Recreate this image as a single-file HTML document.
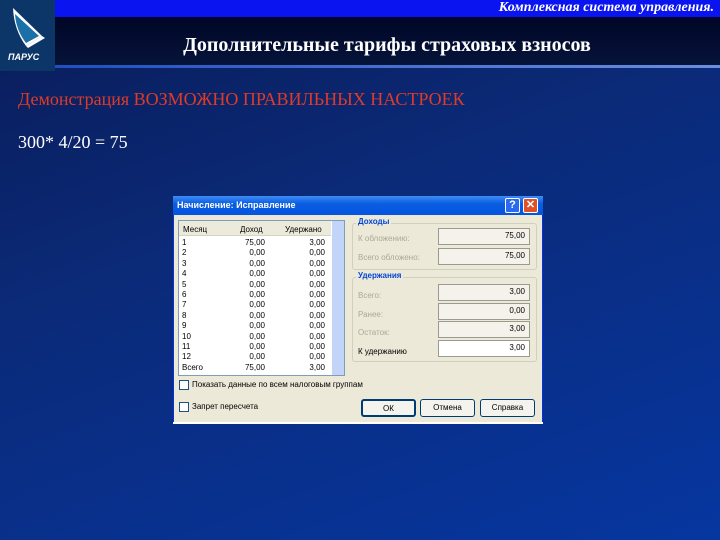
<!DOCTYPE html>
<html><head><meta charset="utf-8"><style>
*{margin:0;padding:0;box-sizing:border-box}
body{width:720px;height:540px;overflow:hidden;position:relative;font-family:"Liberation Serif","DejaVu Serif",serif;
background:linear-gradient(160deg,#0a1c58 0%,#0b2a78 40%,#0636a0 100%);}
.abs{position:absolute}
.d{font-family:"Liberation Sans","DejaVu Sans",sans-serif;font-size:8px;color:#000;position:absolute;white-space:nowrap}
.f{position:absolute;left:438px;width:92px;height:17px;background:#f4f2ea;border:1px solid #9a9a90;font-family:"Liberation Sans",sans-serif;font-size:8px;text-align:right;padding:2px 4px 0 0}
.g{color:#aca899}
.btn{position:absolute;top:399px;width:55px;height:18px;background:#f4f3ee;border:1px solid #003c74;border-radius:3px;font-family:"Liberation Sans",sans-serif;font-size:8px;text-align:center;line-height:16px}
</style></head><body>
<div class="abs" style="left:55px;top:0;width:665px;height:17px;background:#0a14f0"></div>
<div class="abs" style="left:55px;top:17px;width:665px;height:49px;background:linear-gradient(180deg,#000626,#06143a)"></div>
<div class="abs" style="left:55px;top:65px;width:665px;height:3px;background:linear-gradient(90deg,#2050c0,#6a8ee0)"></div>
<div class="abs" style="left:0;top:0;width:55px;height:71px;background:#0d3668"></div>
<svg class="abs" style="left:0;top:0" width="55" height="71">
<path d="M13 8 L42 36 L26 46 Q14 30 13 8Z" fill="#fff"/>
<path d="M15 14 L39 36 L26 43 Q16 30 15 14Z" fill="#1c70a8"/>
<path d="M42 36 L45 38 L28 48 L26 46Z" fill="#fff"/>
<text x="8" y="60" font-family="Liberation Sans" font-style="italic" font-weight="bold" font-size="9" fill="#fff">ПАРУС</text>
</svg>
<div class="abs" style="right:6px;top:0px;color:#fff;font-style:italic;font-weight:bold;font-size:14px;line-height:16px">Комплексная система управления.</div>
<div class="abs" style="left:0;width:774px;top:34px;text-align:center;color:#fff;font-weight:bold;font-size:20px">Дополнительные тарифы страховых взносов</div>
<div class="abs" style="left:18px;top:89px;color:#e03a28;font-size:18px">Демонстрация ВОЗМОЖНО ПРАВИЛЬНЫХ НАСТРОЕК</div>
<div class="abs" style="left:18px;top:132px;color:#fff;font-size:18px">300* 4/20 = 75</div>

<div class="abs" style="left:173px;top:196px;width:370px;height:227px;background:#ece9d8;border:1px solid #0831d9"></div>
<div class="abs" style="left:173px;top:196px;width:370px;height:19px;background:linear-gradient(180deg,#3d8cf5,#0a5ee0 40%,#0554e0)"></div>
<div class="d" style="left:177px;top:200px;color:#fff;font-weight:bold;font-size:9px">Начисление: Исправление</div>
<div class="abs" style="left:505px;top:198px;width:15px;height:15px;background:#2a6af0;border:1px solid #fff;border-radius:2px;color:#fff;font:bold 11px 'Liberation Sans';text-align:center;line-height:13px">?</div>
<div class="abs" style="left:523px;top:198px;width:15px;height:15px;background:#e0502a;border:1px solid #fff;border-radius:2px;color:#fff;font:bold 11px 'Liberation Sans';text-align:center;line-height:13px">✕</div>
<div class="abs" style="left:173px;top:422px;width:370px;height:2px;background:#fff"></div>

<div class="abs" style="left:178px;top:220px;width:167px;height:156px;background:#fff;border:1px solid #7f9db9"></div>
<div class="abs" style="left:179px;top:221px;width:152px;height:15px;background:#ebeadb;border-bottom:1px solid #d6d2c2"></div>
<div class="abs" style="left:332px;top:221px;width:12px;height:154px;background:#c2d4f8"></div>
<div class="d" style="left:183px;top:225px">Месяц</div>
<div class="d" style="left:240px;top:225px">Доход</div>
<div class="d" style="left:285px;top:225px">Удержано</div>
<div class="d" style="left:182px;top:238px;line-height:10.4px">1<br>2<br>3<br>4<br>5<br>6<br>7<br>8<br>9<br>10<br>11<br>12<br>Всего</div>
<div class="d" style="left:230px;width:35px;text-align:right;top:238px;line-height:10.4px">75,00<br>0,00<br>0,00<br>0,00<br>0,00<br>0,00<br>0,00<br>0,00<br>0,00<br>0,00<br>0,00<br>0,00<br>75,00</div>
<div class="d" style="left:290px;width:35px;text-align:right;top:238px;line-height:10.4px">3,00<br>0,00<br>0,00<br>0,00<br>0,00<br>0,00<br>0,00<br>0,00<br>0,00<br>0,00<br>0,00<br>0,00<br>3,00</div>

<div class="abs" style="left:352px;top:223px;width:185px;height:47px;border:1px solid #d0d0bf;border-radius:3px"></div>
<div class="d" style="left:356px;top:217px;color:#0046d5;font-weight:bold;background:#ece9d8;padding:0 2px">Доходы</div>
<div class="d g" style="left:358px;top:234px">К обложению:</div>
<div class="d g" style="left:358px;top:253px">Всего обложено:</div>
<div class="f" style="top:228px">75,00</div>
<div class="f" style="top:248px">75,00</div>
<div class="abs" style="left:352px;top:277px;width:185px;height:85px;border:1px solid #d0d0bf;border-radius:3px"></div>
<div class="d" style="left:356px;top:271px;color:#0046d5;font-weight:bold;background:#ece9d8;padding:0 2px">Удержания</div>
<div class="d g" style="left:358px;top:291px">Всего:</div>
<div class="d g" style="left:358px;top:310px">Ранее:</div>
<div class="d g" style="left:358px;top:328px">Остаток:</div>
<div class="d" style="left:358px;top:347px">К удержанию</div>
<div class="f" style="top:284px">3,00</div>
<div class="f" style="top:303px">0,00</div>
<div class="f" style="top:321px">3,00</div>
<div class="f" style="top:340px;background:#fff">3,00</div>

<div class="abs" style="left:179px;top:380px;width:10px;height:10px;background:#fff;border:1px solid #1c5180"></div>
<div class="d" style="left:192px;top:380px">Показать данные по всем налоговым группам</div>
<div class="abs" style="left:179px;top:402px;width:10px;height:10px;background:#fff;border:1px solid #1c5180"></div>
<div class="d" style="left:192px;top:402px">Запрет пересчета</div>
<div class="btn" style="left:361px;border-width:2px">ОК</div>
<div class="btn" style="left:420px">Отмена</div>
<div class="btn" style="left:480px">Справка</div>
</body></html>
